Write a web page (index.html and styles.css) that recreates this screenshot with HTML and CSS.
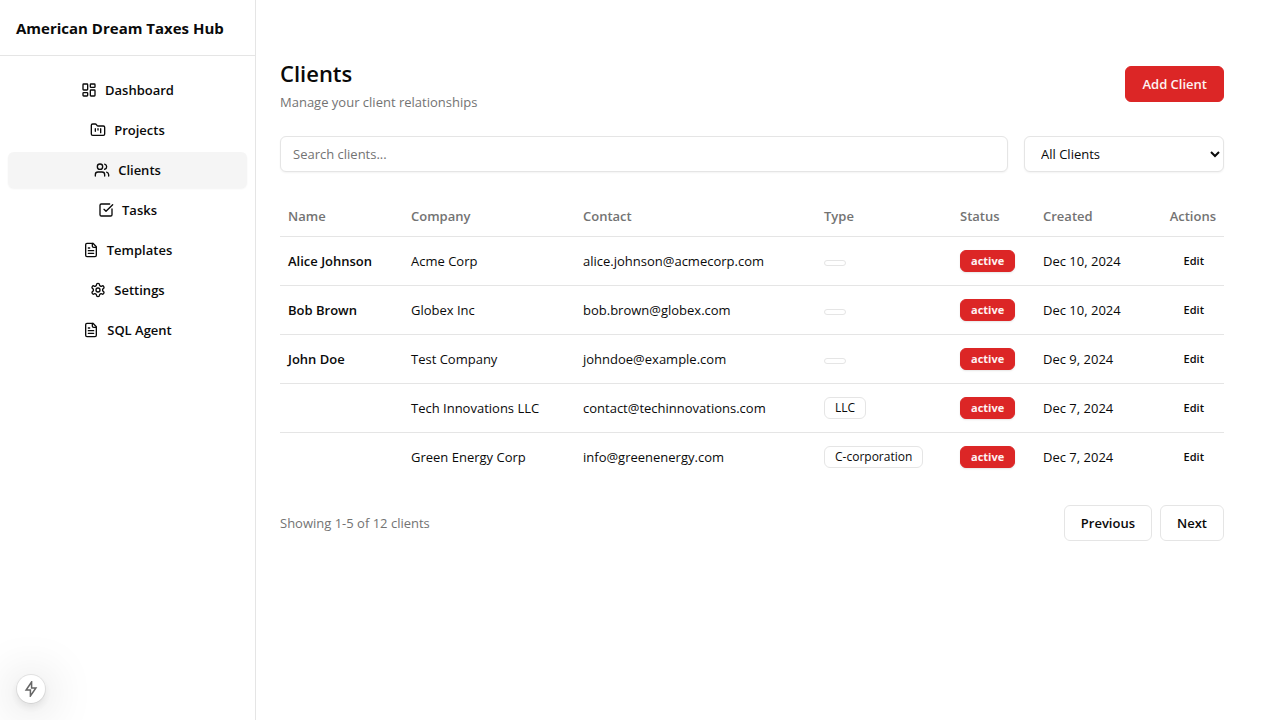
FILE: index.html
```html
<!DOCTYPE html>
<html lang="en">
<head>
<meta charset="utf-8">
<meta name="viewport" content="width=device-width, initial-scale=1">
<title>Clients</title>
<link rel="stylesheet" href="styles.css">
</head>
<body>
<div class="app">
  <aside class="sidebar">
    <div class="brand">American Dream Taxes Hub</div>
    <nav class="nav">
      <a class="nav-item" href="#"><svg class="icon" viewBox="0 0 24 24"><rect width="7" height="9" x="3" y="3" rx="1"/><rect width="7" height="5" x="14" y="3" rx="1"/><rect width="7" height="9" x="14" y="12" rx="1"/><rect width="7" height="5" x="3" y="16" rx="1"/></svg><span>Dashboard</span></a>
      <a class="nav-item" href="#"><svg class="icon" viewBox="0 0 24 24"><path d="M4 20h16a2 2 0 0 0 2-2V8a2 2 0 0 0-2-2h-7.93a2 2 0 0 1-1.66-.9l-.82-1.2A2 2 0 0 0 7.93 3H4a2 2 0 0 0-2 2v13c0 1.1.9 2 2 2Z"/><path d="M8 10v4"/><path d="M12 10v2"/><path d="M16 10v6"/></svg><span>Projects</span></a>
      <a class="nav-item nav-item-active" href="#" aria-current="page"><svg class="icon" viewBox="0 0 24 24"><path d="M16 21v-2a4 4 0 0 0-4-4H6a4 4 0 0 0-4 4v2"/><circle cx="9" cy="7" r="4"/><path d="M22 21v-2a4 4 0 0 0-3-3.87"/><path d="M16 3.13a4 4 0 0 1 0 7.75"/></svg><span>Clients</span></a>
      <a class="nav-item" href="#"><svg class="icon" viewBox="0 0 24 24"><path d="M21 10.5V19a2 2 0 0 1-2 2H5a2 2 0 0 1-2-2V5a2 2 0 0 1 2-2h12.5"/><path d="m9 11 3 3L22 4"/></svg><span>Tasks</span></a>
      <a class="nav-item" href="#"><svg class="icon" viewBox="0 0 24 24"><path d="M15 2H6a2 2 0 0 0-2 2v16a2 2 0 0 0 2 2h12a2 2 0 0 0 2-2V7Z"/><path d="M14 2v4a2 2 0 0 0 2 2h4"/><path d="M10 9H8"/><path d="M16 13H8"/><path d="M16 17H8"/></svg><span>Templates</span></a>
      <a class="nav-item" href="#"><svg class="icon" viewBox="0 0 24 24"><path d="M12.22 2h-.44a2 2 0 0 0-2 2v.18a2 2 0 0 1-1 1.73l-.43.25a2 2 0 0 1-2 0l-.15-.08a2 2 0 0 0-2.73.73l-.22.38a2 2 0 0 0 .73 2.73l.15.1a2 2 0 0 1 1 1.72v.51a2 2 0 0 1-1 1.74l-.15.09a2 2 0 0 0-.73 2.73l.22.38a2 2 0 0 0 2.73.73l.15-.08a2 2 0 0 1 2 0l.43.25a2 2 0 0 1 1 1.73V20a2 2 0 0 0 2 2h.44a2 2 0 0 0 2-2v-.18a2 2 0 0 1 1-1.73l.43-.25a2 2 0 0 1 2 0l.15.08a2 2 0 0 0 2.73-.73l.22-.39a2 2 0 0 0-.73-2.73l-.15-.08a2 2 0 0 1-1-1.74v-.5a2 2 0 0 1 1-1.74l.15-.09a2 2 0 0 0 .73-2.73l-.22-.38a2 2 0 0 0-2.73-.73l-.15.08a2 2 0 0 1-2 0l-.43-.25a2 2 0 0 1-1-1.73V4a2 2 0 0 0-2-2z"/><circle cx="12" cy="12" r="3"/></svg><span>Settings</span></a>
      <a class="nav-item" href="#"><svg class="icon" viewBox="0 0 24 24"><path d="M15 2H6a2 2 0 0 0-2 2v16a2 2 0 0 0 2 2h12a2 2 0 0 0 2-2V7Z"/><path d="M14 2v4a2 2 0 0 0 2 2h4"/><path d="M10 9H8"/><path d="M16 13H8"/><path d="M16 17H8"/></svg><span>SQL Agent</span></a>
    </nav>
  </aside>

  <main class="main">
    <header class="page-header">
      <div>
        <h1 class="page-title">Clients</h1>
        <p class="muted">Manage your client relationships</p>
      </div>
      <button class="button button-primary" type="button">Add Client</button>
    </header>

    <div class="filters">
      <input class="field search" type="text" placeholder="Search clients..." aria-label="Search clients">
      <select class="field filter" aria-label="Client status"><option>All Clients</option></select>
    </div>

    <table class="table">
      <colgroup>
        <col class="col-name"><col class="col-company"><col class="col-contact"><col class="col-type"><col class="col-status"><col class="col-created"><col class="col-actions">
      </colgroup>
      <thead>
        <tr><th>Name</th><th>Company</th><th>Contact</th><th>Type</th><th>Status</th><th>Created</th><th class="end">Actions</th></tr>
      </thead>
      <tbody>
        <tr><td class="name">Alice Johnson</td><td>Acme Corp</td><td>alice.johnson@acmecorp.com</td><td><div class="badge"></div></td><td><div class="badge badge-active">active</div></td><td>Dec 10, 2024</td><td class="end"><button class="edit" type="button">Edit</button></td></tr>
        <tr><td class="name">Bob Brown</td><td>Globex Inc</td><td>bob.brown@globex.com</td><td><div class="badge"></div></td><td><div class="badge badge-active">active</div></td><td>Dec 10, 2024</td><td class="end"><button class="edit" type="button">Edit</button></td></tr>
        <tr><td class="name">John Doe</td><td>Test Company</td><td>johndoe@example.com</td><td><div class="badge"></div></td><td><div class="badge badge-active">active</div></td><td>Dec 9, 2024</td><td class="end"><button class="edit" type="button">Edit</button></td></tr>
        <tr><td class="name"></td><td>Tech Innovations LLC</td><td>contact@techinnovations.com</td><td><div class="badge">LLC</div></td><td><div class="badge badge-active">active</div></td><td>Dec 7, 2024</td><td class="end"><button class="edit" type="button">Edit</button></td></tr>
        <tr><td class="name"></td><td>Green Energy Corp</td><td>info@greenenergy.com</td><td><div class="badge">C-corporation</div></td><td><div class="badge badge-active">active</div></td><td>Dec 7, 2024</td><td class="end"><button class="edit" type="button">Edit</button></td></tr>
      </tbody>
    </table>

    <footer class="pagination">
      <p class="muted">Showing 1-5 of 12 clients</p>
      <div class="pager">
        <button class="button" type="button">Previous</button>
        <button class="button" type="button">Next</button>
      </div>
    </footer>
  </main>
</div>
<button class="indicator" type="button" aria-label="Developer tools"><svg class="bolt" viewBox="0 0 16 16"><path d="M8.6 1 3.1 9.1h4.3V15l5.5-8.1H8.6Z"/></svg></button>
</body>
</html>
```
FILE: styles.css
```css
* { box-sizing: border-box; }

body {
  margin: 0;
  background: #fff;
  color: #0a0a0a;
  font-family: "Segoe UI", "Open Sans", "Noto Sans", sans-serif;
  font-size: 13px;
  line-height: 20px;
}

h1, p { margin: 0; }

button, input, select { font: inherit; color: inherit; }

.app { display: flex; min-height: 100vh; }

.sidebar {
  flex: none;
  width: 256px;
  border-right: 1px solid #e5e5e5;
}

.brand {
  display: flex;
  align-items: center;
  height: 56px;
  padding: 0 16px;
  border-bottom: 1px solid #e5e5e5;
  font-size: 15px;
  font-weight: 700;
  white-space: nowrap;
}

.nav {
  display: flex;
  flex-direction: column;
  gap: 4px;
  padding: 16px 8px;
}

.nav-item {
  display: flex;
  align-items: center;
  justify-content: center;
  gap: 8px;
  height: 36px;
  border-radius: 6px;
  color: inherit;
  font-weight: 600;
  text-decoration: none;
}

.nav-item-active {
  background: #f5f5f5;
  box-shadow: 0 1px 2px rgba(0, 0, 0, 0.05);
}

.icon {
  width: 16px;
  height: 16px;
  fill: none;
  stroke: currentColor;
  stroke-width: 2;
  stroke-linecap: round;
  stroke-linejoin: round;
}

.main {
  flex: 1;
  min-width: 0;
  padding: 56px 56px 24px 24px;
}

.page-header, .pagination {
  display: flex;
  align-items: center;
  justify-content: space-between;
}

.page-title {
  padding-bottom: 2px;
  font-size: 22px;
  font-weight: 600;
  line-height: 34px;
}

.muted { color: #737373; }

.button {
  height: 36px;
  padding: 0 16px;
  border: 1px solid #e5e5e5;
  border-radius: 6px;
  background: #fff;
  font-weight: 600;
}

.button-primary {
  border-color: #dc2626;
  background: #dc2626;
  color: #fef2f2;
}

.filters { display: flex; gap: 16px; margin: 24px 0; }

.field {
  height: 36px;
  padding: 0 12px;
  border: 1px solid #e5e5e5;
  border-radius: 6px;
  background: #fff;
  box-shadow: 0 1px 2px rgba(0, 0, 0, 0.05);
}

.field::placeholder { color: #737373; opacity: 1; }

.search { flex: 1; min-width: 0; }

.filter { width: 200px; padding: 0 0 0 12px; }

.table {
  width: 100%;
  table-layout: fixed;
  border-collapse: separate;
  border-spacing: 0;
}

.col-name { width: 123px; }
.col-company { width: 172px; }
.col-contact { width: 241px; }
.col-type { width: 136px; }
.col-status { width: 83px; }
.col-created { width: 124px; }
.col-actions { width: 65px; }

th, td {
  padding: 0 8px;
  border-bottom: 1px solid #e5e5e5;
  text-align: left;
  white-space: nowrap;
}

th { height: 41px; color: #737373; font-weight: 600; }
td { height: 49px; }
tbody tr:last-child td { height: 48px; border-bottom: 0; }
.name { font-weight: 600; }
th.end, td.end { text-align: right; }

.badge {
  display: inline-flex;
  padding: 2px 10px;
  border: 1px solid #e5e5e5;
  border-radius: 6px;
  font-size: 12px;
  font-weight: 500;
  line-height: 16px;
}

.badge-active {
  border-color: #dc2626;
  background: #dc2626;
  box-shadow: 0 1px 2px rgba(0, 0, 0, 0.1);
  color: #fef2f2;
  font-size: 11px;
  font-weight: 700;
}

.edit {
  height: 32px;
  padding: 0 12px;
  border: 0;
  border-radius: 6px;
  background: transparent;
  font-size: 11px;
  font-weight: 600;
}

.pagination { margin-top: 24px; }
.pager { display: flex; gap: 8px; }

.indicator {
  position: fixed;
  left: 17px;
  bottom: 17px;
  display: flex;
  align-items: center;
  justify-content: center;
  width: 28px;
  height: 28px;
  padding: 0;
  border: 0;
  border-radius: 50%;
  background: #fff;
  box-shadow: 0 0 0 1px rgba(0, 0, 0, 0.08), 0 4px 10px rgba(0, 0, 0, 0.1), 0 4px 48px rgba(0, 0, 0, 0.28);
}

.bolt {
  width: 16px;
  height: 16px;
  fill: none;
  stroke: #666;
  stroke-width: 1.5;
}
```
